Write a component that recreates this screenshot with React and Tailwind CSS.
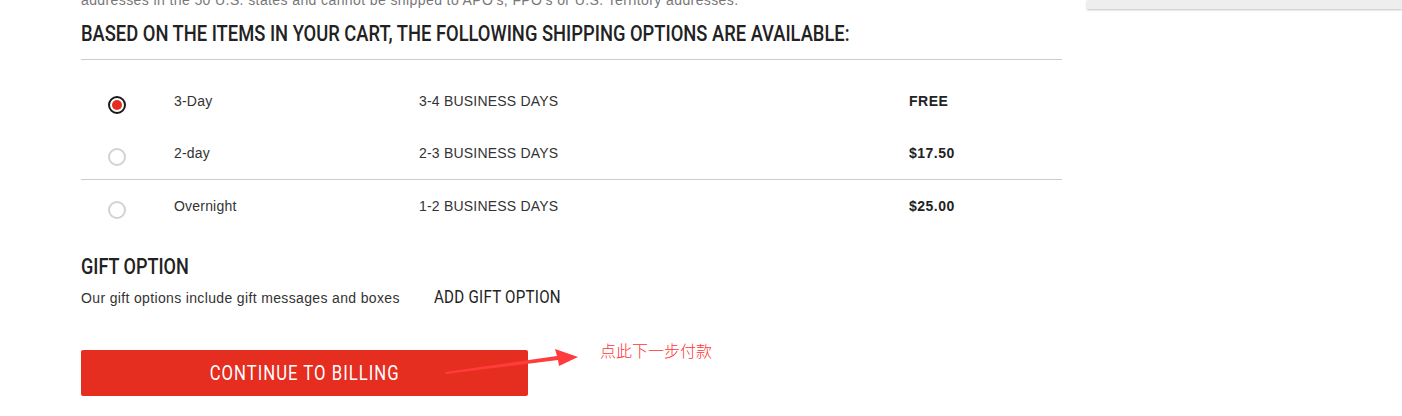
import React from 'react';

const BODY = '"Liberation Sans", Arial, sans-serif';
const NARROW = { fontFamily: 'Roboto, "Liberation Sans", sans-serif' };

const OPTIONS = [
  { id: '3day', name: '3-Day', days: '3-4 BUSINESS DAYS', price: 'FREE', selected: true },
  { id: '2day', name: '2-day', days: '2-3 BUSINESS DAYS', price: '$17.50' },
  { id: 'overnight', name: 'Overnight', days: '1-2 BUSINESS DAYS', price: '$25.00' },
];

function Radio({ selected }) {
  if (selected) {
    return (
      <div className="w-[18px] h-[18px] rounded-full border-2 border-[#1a1a1a] flex items-center justify-center">
        <div className="w-[10px] h-[10px] rounded-full bg-[#e52d20]" />
      </div>
    );
  }
  return <div className="w-[18px] h-[18px] rounded-full border-2 border-[#d2d2d2]" />;
}

function OptionRow({ opt }) {
  return (
    <div className="flex items-center h-[52px]">
      <div className="w-[93px] pl-[27px] mt-[8px]">
        <Radio selected={opt.selected} />
      </div>
      <div className="w-[245px] text-[14px] tracking-[0.2px] text-[#333]">{opt.name}</div>
      <div className="w-[490px] text-[14px] tracking-[0.2px] text-[#333]">{opt.days}</div>
      <div className="text-[14px] font-bold tracking-[0.5px] text-[#222]">{opt.price}</div>
    </div>
  );
}

export default function App() {
  return (
    <div className="relative w-[1402px] h-[416px] overflow-hidden bg-white" style={{ fontFamily: BODY }}>
      <div className="flex">
        {/* main column */}
        <div className="ml-[81px] w-[981px]">
          <p className="-mt-[8px] text-[14px] leading-[16px] tracking-[0.4px] text-[#777] whitespace-nowrap">
            addresses in the 50 U.S. states and cannot be shipped to APO's, FPO's or U.S. Territory addresses.
          </p>

          <div className="border-b border-[#cccccc] pt-[13px] pb-[11px]">
            <h2
              className="inline-block origin-left scale-x-[0.834] whitespace-nowrap text-[22px] leading-[26px] font-medium text-[#222]"
              style={NARROW}
            >
              BASED ON THE ITEMS IN YOUR CART, THE FOLLOWING SHIPPING OPTIONS ARE AVAILABLE:
            </h2>
          </div>

          <div className="pt-[15px] border-b border-[#cccccc]">
            <OptionRow opt={OPTIONS[0]} />
            <OptionRow opt={OPTIONS[1]} />
          </div>
          <OptionRow opt={OPTIONS[2]} />

          <div className="mt-[22px]">
            <h3
              className="inline-block origin-left scale-x-[0.82] whitespace-nowrap text-[22px] leading-[26px] font-medium text-[#222]"
              style={NARROW}
            >
              GIFT OPTION
            </h3>
            <div className="flex items-center mt-[6px]">
              <span className="text-[14px] tracking-[0.35px] text-[#333] w-[353px]">Our gift options include gift messages and boxes</span>
              <span
                className="inline-block origin-left scale-x-[0.84] -mt-[4px] whitespace-nowrap text-[18px] text-[#222] tracking-[0.3px]"
                style={NARROW}
              >
                ADD GIFT OPTION
              </span>
            </div>
          </div>

          <div className="flex items-start mt-[40px]">
            <button className="w-[447px] h-[46px] rounded-[2px] bg-[#e52d20] flex items-center justify-center">
              <span
                className="inline-block scale-x-[0.835] whitespace-nowrap text-white text-[20px] tracking-[1.2px]"
                style={NARROW}
              >
                CONTINUE TO BILLING
              </span>
            </button>
            <span
              className="ml-[72px] -mt-[12px] text-[16px] text-[#ff3333]"
              style={{ fontFamily: '"Noto Sans CJK SC", sans-serif', fontWeight: 300 }}
            >
              点此下一步付款
            </span>
          </div>
        </div>

        {/* sidebar */}
        <div className="ml-[25px] flex-1">
          <div className="h-[9px] bg-[#eeeeee] shadow-[0_1px_2px_rgba(0,0,0,0.25)]" />
        </div>
      </div>

      {/* annotation arrow */}
      <svg className="absolute left-0 top-0 pointer-events-none" width="1402" height="416">
        <polygon points="445,372 557,356 555,349 578,357 559,366 558,360 446,374" fill="#ff3b3b" />
      </svg>
    </div>
  );
}
